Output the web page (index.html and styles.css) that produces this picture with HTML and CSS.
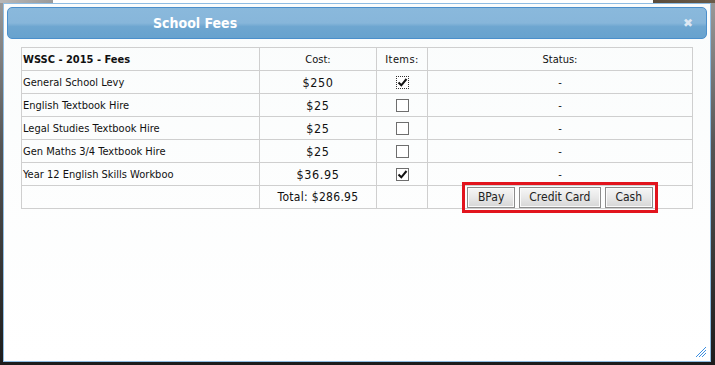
FILE: index.html
```html
<!DOCTYPE html>
<html>
<head>
<meta charset="utf-8">
<link rel="stylesheet" href="styles.css">
</head>
<body>
<div class="screen">
  <div class="dialog">
    <div class="titlebar">
      <span class="title">School Fees</span>
      <span class="close">&#10006;</span>
    </div>
    <div class="content">
      <table class="fees">
        <colgroup>
          <col class="c1"><col class="c2"><col class="c3"><col class="c4">
        </colgroup>
        <tr class="head">
          <th class="name">WSSC - 2015 - Fees</th>
          <th>Cost:</th>
          <th class="items">Items:</th>
          <th>Status:</th>
        </tr>
        <tr>
          <td class="name">General School Levy</td>
          <td class="cost">$250</td>
          <td class="chk"><span class="box focus"><svg viewBox="0 0 11 11" width="11" height="11"><path d="M1.5 5.5 L4.3 8.3 L9.5 2" fill="none" stroke="#111" stroke-width="2"/></svg></span></td>
          <td class="status">-</td>
        </tr>
        <tr>
          <td class="name">English Textbook Hire</td>
          <td class="cost">$25</td>
          <td class="chk"><span class="box"></span></td>
          <td class="status">-</td>
        </tr>
        <tr>
          <td class="name">Legal Studies Textbook Hire</td>
          <td class="cost">$25</td>
          <td class="chk"><span class="box"></span></td>
          <td class="status">-</td>
        </tr>
        <tr>
          <td class="name">Gen Maths 3/4 Textbook Hire</td>
          <td class="cost">$25</td>
          <td class="chk"><span class="box"></span></td>
          <td class="status">-</td>
        </tr>
        <tr>
          <td class="name">Year 12 English Skills Workboo</td>
          <td class="cost">$36.95</td>
          <td class="chk"><span class="box"><svg viewBox="0 0 11 11" width="11" height="11"><path d="M1.5 5.5 L4.3 8.3 L9.5 2" fill="none" stroke="#111" stroke-width="2"/></svg></span></td>
          <td class="status">-</td>
        </tr>
        <tr class="foot">
          <td></td>
          <td class="total">Total: $286.95</td>
          <td></td>
          <td class="pay">
            <div class="btns">
              <button class="btn">BPay</button>
              <button class="btn">Credit Card</button>
              <button class="btn">Cash</button>
            </div>
          </td>
        </tr>
      </table>
    </div>
    <svg class="grip" width="10" height="10" viewBox="0 0 10 10">
      <g fill="#3d8fe0">
        <rect x="9" y="0" width="1" height="1"/><rect x="8" y="1" width="1" height="1"/><rect x="7" y="2" width="1" height="1"/><rect x="6" y="3" width="1" height="1"/><rect x="5" y="4" width="1" height="1"/><rect x="4" y="5" width="1" height="1"/><rect x="3" y="6" width="1" height="1"/><rect x="2" y="7" width="1" height="1"/><rect x="1" y="8" width="1" height="1"/><rect x="0" y="9" width="1" height="1"/>
        <rect x="9" y="3" width="1" height="1"/><rect x="8" y="4" width="1" height="1"/><rect x="7" y="5" width="1" height="1"/><rect x="6" y="6" width="1" height="1"/><rect x="5" y="7" width="1" height="1"/><rect x="4" y="8" width="1" height="1"/><rect x="3" y="9" width="1" height="1"/>
        <rect x="9" y="6" width="1" height="1"/><rect x="8" y="7" width="1" height="1"/><rect x="7" y="8" width="1" height="1"/><rect x="6" y="9" width="1" height="1"/>
      </g>
    </svg>
  </div>
</div>
</body>
</html>
```

FILE: styles.css
```css
html, body {
  margin: 0;
  padding: 0;
  width: 715px;
  height: 365px;
  overflow: hidden;
}
body {
  background:
    linear-gradient(to right, #b8b8b8 0, #9a9a9a 53px, #ffffff 53px, #ffffff 653px, #5a4c3c 653px, #6a5c4a 715px) top / 100% 3px no-repeat,
    linear-gradient(to bottom, #9a9a9a 0, #555 40%, #1c1c1c 100%);
  font-family: "DejaVu Sans Condensed", "DejaVu Sans", Verdana, sans-serif;
}
.screen {
  padding: 3px 4px 3px 3px;
  height: 359px;
  box-sizing: content-box;
}
.dialog {
  position: relative;
  box-sizing: border-box;
  width: 708px;
  height: 359px;
  border: 1px solid #8fbde3;
  background: linear-gradient(to bottom, #fafcfc 0%, #ffffff 100%);
  padding: 3px 3px 0 3px;
}
.titlebar {
  box-sizing: border-box;
  height: 32px;
  border: 1px solid #4b8fcb;
  border-radius: 5px;
  background: linear-gradient(to bottom, #8ab9dc 0%, #87b6da 50%, #6ea6d0 62%, #68a2ce 100%);
  display: flex;
  align-items: center;
  padding-left: 145px;
  padding-right: 13px;
}
.title {
  color: #ffffff;
  font-weight: bold;
  font-size: 14px;
  flex: 1;
}
.close {
  color: #dde8f3;
  font-size: 12px;
  font-weight: bold;
  font-family: "DejaVu Sans", sans-serif;
}
.content {
  padding: 8px 0 0 14px;
}
.fees {
  border-collapse: collapse;
  width: 671px;
  table-layout: fixed;
  font-size: 11px;
  color: #111;
}
.c1 { width: 238px; }
.c2 { width: 117px; }
.c3 { width: 51px; }
.c4 { width: 265px; }
.fees th, .fees td {
  border: 1px solid #cfcfcf;
  height: 22px;
  padding: 0 2px;
  text-align: center;
  white-space: nowrap;
  vertical-align: middle;
}
.fees th {
  font-weight: normal;
}
.fees th.name {
  font-weight: bold;
  text-align: left;
  padding-left: 1px;
}
.fees td.name {
  text-align: left;
  padding-left: 1px;
}
.items {
  letter-spacing: 0.4px;
}
.cost {
  font-size: 12.5px;
  letter-spacing: 0.6px;
}
.total {
  font-size: 12px;
  letter-spacing: 0.3px;
}
.box {
  display: inline-block;
  box-sizing: border-box;
  width: 13px;
  height: 13px;
  border: 1px solid #6e6e6e;
  background: #fff;
  vertical-align: middle;
  position: relative;
}
.box svg {
  position: absolute;
  left: 0;
  top: 0;
}
.box.focus {
  border: 1px dotted #333;
}
.pay {
  padding: 0;
}
.btns {
  display: inline-flex;
  gap: 4px;
  outline: 3px solid #e2141d;
  outline-offset: 2px;
  vertical-align: middle;
}
.btn {
  font-family: "DejaVu Sans Condensed", "DejaVu Sans", Verdana, sans-serif;
  font-size: 12px;
  color: #222;
  height: 21px;
  padding: 0 9.5px;
  border: 1px solid #8c8c8c;
  border-radius: 0;
  background: linear-gradient(to bottom, #f6f6f6 0%, #e8e8e8 50%, #d6d6d6 100%);
  box-shadow: inset 0 0 0 1px #fbfbfb;
}
.grip {
  position: absolute;
  right: 4px;
  bottom: 4px;
}
```
